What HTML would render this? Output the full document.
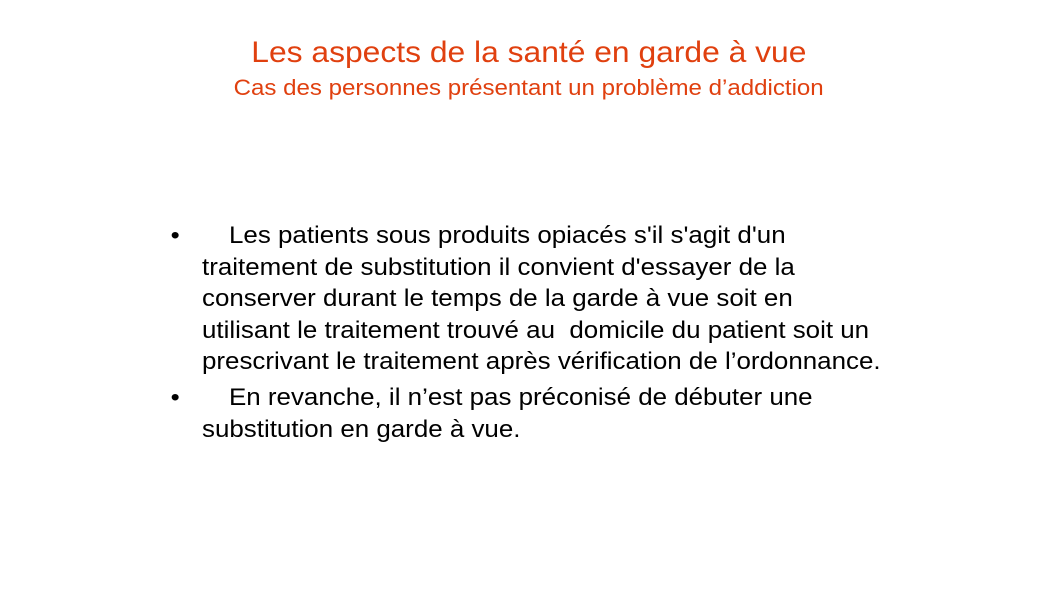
<!DOCTYPE html>
<html><head><meta charset="utf-8"><style>
body{margin:0;width:1058px;height:595px;background:#fff;font-family:"Liberation Sans",sans-serif;position:relative;overflow:hidden}
.t{position:absolute;left:0;width:1058px;text-align:center;color:#e0400f;white-space:nowrap}
.t div{display:inline-block}
.t1{top:36px;font-size:30px}
.t1 div{transform:scaleX(1.06)}
.t2{top:75px;font-size:22px}
.t2 div{transform:scaleX(1.094)}
.b{position:absolute;left:202px;font-size:24px;line-height:31.5px;color:#000;width:720px;white-space:nowrap;transform:scaleX(1.08);transform-origin:0 0}
.b span{position:absolute;left:-29px}
.i{display:inline-block;width:25px}
</style></head><body>
<div class="t t1"><div>Les aspects de la santé en garde à vue</div></div>
<div class="t t2"><div>Cas des personnes présentant un problème d’addiction</div></div>
<div class="b" style="top:220px"><span>•</span><i class="i"></i>Les patients sous produits opiacés s'il s'agit d'un<br>traitement de substitution il convient d'essayer de la<br>conserver durant le temps de la garde à vue soit en<br>utilisant le traitement trouvé au&nbsp; domicile du patient soit un<br>prescrivant le traitement après vérification de l’ordonnance.</div>
<div class="b" style="top:382px"><span>•</span><i class="i"></i>En revanche, il n’est pas préconisé de débuter une<br>substitution en garde à vue.</div>
</body></html>
